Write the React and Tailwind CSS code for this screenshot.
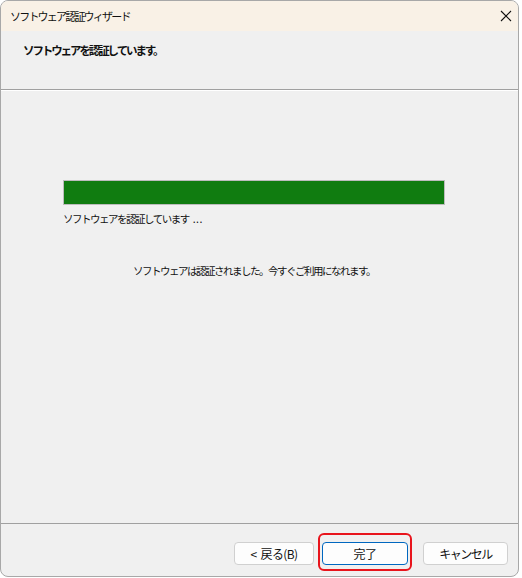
import React from "react";

const font = { fontFamily: '"Noto Sans CJK JP", "Noto Sans", sans-serif' };

function CloseIcon() {
  return (
    <svg width="12" height="12" viewBox="0 0 12 12" fill="none" stroke="#111" strokeWidth="1.1">
      <path d="M1 1l10 10M11 1L1 11" />
    </svg>
  );
}

export default function App() {
  return (
    <div className="w-[522px] h-[578px] bg-white" style={font}>
      <div className="w-[519px] h-[577px] flex flex-col border border-[#a8a8a8] rounded-lg overflow-hidden bg-[#f0f0f0] text-[12px] text-[#111]">
        {/* Title bar */}
        <div className="h-[30px] flex items-center justify-between bg-[#f9f1e6] pl-[9px] pr-[2px] shrink-0">
          <span className="text-[11px] tracking-[-1.8px] leading-none">ソフトウェア認証ウィザード</span>
          <div className="w-[20px] h-[20px] flex items-center justify-center">
            <CloseIcon />
          </div>
        </div>

        {/* Header */}
        <div className="h-[59px] shrink-0 pl-[22px] pt-[10px] border-b border-[#a0a0a0]">
          <span className="font-bold text-[11.5px] tracking-[-2.1px]">ソフトウェアを認証しています。</span>
        </div>
        <div className="h-px bg-white shrink-0" />

        {/* Content */}
        <div className="flex-1 flex flex-col pt-[89px] pl-[62px]">
          <div className="w-[382px] h-[25px] border border-[#bcbcbc] bg-[#107c10]" />
          <div className="mt-[6px] text-[10.5px] leading-[16px]">
            <span className="tracking-[-1.5px]">ソフトウェアを認証しています</span>
            <span className="ml-[4px] tracking-[0.5px]">...</span>
          </div>
          <div className="mt-[36px] w-[382px] text-center text-[10.5px] tracking-[-1.5px] leading-[16px]">
            ソフトウェアは認証されました。今すぐご利用になれます。
          </div>
        </div>

        {/* Footer */}
        <div className="h-[53px] shrink-0 border-t border-[#a0a0a0] flex items-start justify-end pt-[18px] pr-[10px]">
          <button className="w-[80px] h-[23px] bg-[#fdfdfd] border border-[#d0d0d0] rounded-[4px] text-[12px] tracking-[-0.6px] leading-none">
            &lt;<span className="ml-[4px]">戻る(B)</span>
          </button>
          <div className="relative ml-[8px]">
            <button className="w-[86px] h-[23px] bg-[#fdfdfd] border border-[#0067c0] rounded-[4px] text-[12px] tracking-[-0.6px] leading-none">
              完了
            </button>
            <div className="absolute -left-[4px] -top-[9px] w-[94px] h-[38px] border-2 border-[#e8141c] rounded-[6px] pointer-events-none" />
          </div>
          <button className="ml-[15px] w-[85px] h-[23px] bg-[#fdfdfd] border border-[#d0d0d0] rounded-[4px] text-[12px] tracking-[-1.5px] leading-none">
            キャンセル
          </button>
        </div>
      </div>
    </div>
  );
}
